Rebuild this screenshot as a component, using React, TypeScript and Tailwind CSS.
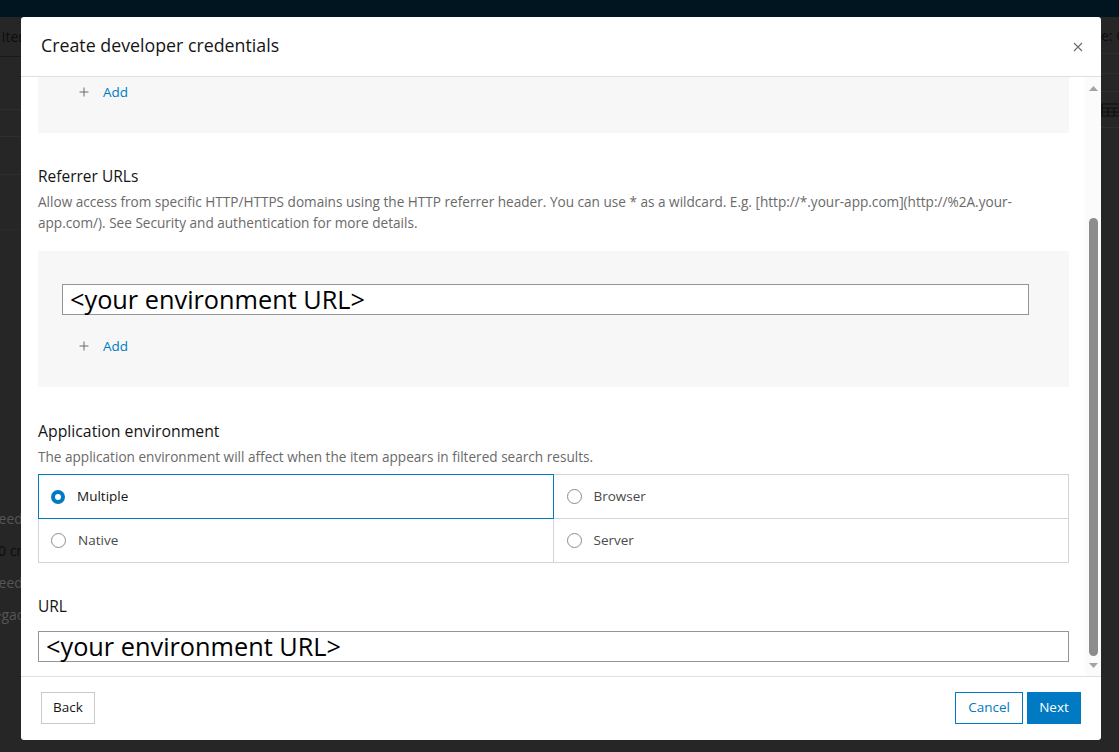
import React from "react";

const FONT = { fontFamily: "'Open Sans', 'Noto Sans', sans-serif" };

function AddRow() {
  return (
    <div className="flex items-center h-[20px] pl-[41px] text-[13.5px] text-[#007ac2]">
      <svg width="10" height="10" viewBox="0 0 10 10" className="mr-[14px]">
        <path d="M5 0.5V9.5M0.5 5H9.5" stroke="#6a6a6a" strokeWidth="1" />
      </svg>
      <span>Add</span>
    </div>
  );
}

function Radio({ checked }: { checked?: boolean }) {
  if (checked)
    return <span className="w-[14px] h-[14px] rounded-full border-[4.5px] border-[#007ac2] bg-white shrink-0" />;
  return <span className="w-[15px] h-[15px] rounded-full border border-[#8c8c8c] bg-white shrink-0" />;
}

function Cell({ label, checked, cls }: { label: string; checked?: boolean; cls: string }) {
  return (
    <div className={"flex items-center h-[45px] gap-[12px] text-[13.5px] border -mt-px " + cls}>
      <Radio checked={checked} />
      <span className={checked ? "text-[#151515]" : "text-[#4a4a4a]"}>{label}</span>
    </div>
  );
}

function UrlInput() {
  return (
    <div
      className="h-[31px] border border-[#959595] bg-white flex items-center pl-[7px] text-[25.3px] text-black leading-none"
      style={{ fontFamily: "'Open Sans', 'Noto Sans', sans-serif" }}
    >
      &lt;your environment URL&gt;
    </div>
  );
}

export default function App() {
  return (
    <div className="relative w-[1119px] h-[752px] overflow-hidden bg-[#262626]" style={FONT}>
      {/* Background page (dimmed) */}
      <div className="flex flex-col h-full">
        <div className="h-[17px] bg-[#001520] shrink-0" />
        <div className="flex flex-1 justify-between">
          <div className="w-[120px] flex flex-col text-[14px]">
            <div className="h-[40px] border-b border-[#1a1a1a] flex items-center -ml-[31px] text-[#0d0d0d] whitespace-nowrap">view items</div>
            <div className="h-[53px] border-b border-[#2e2e2e]" />
            <div className="h-[27px] border-b border-[#2e2e2e]" />
            <div className="h-[38px] border-b border-[#2e2e2e]" />
            <div className="h-[55px] border-b border-[#2b2b2b]" />
            <div className="h-[272px]" />
            <div className="h-[32px] -ml-[10px] flex items-center text-[#555]">needed</div>
            <div className="h-[32px] -ml-[2px] flex items-center text-[#0d0d0d]">0 credits</div>
            <div className="h-[32px] -ml-[10px] flex items-center text-[#555]">needed</div>
            <div className="h-[32px] -ml-[10px] flex items-center text-[#555]">legacy</div>
          </div>
          <div className="w-[18px] flex flex-col text-[14px] overflow-hidden">
            <div className="h-[37px] flex items-center border-b border-[#2e2e2e] text-[#0d0d0d] whitespace-nowrap">e: C</div>
            <div className="h-[20px] border-b border-[#2e2e2e]" />
            <div className="h-[18px] border-b border-[#2e2e2e]" />
            <div className="h-[36px] flex items-center border-b border-[#2e2e2e]">
              <svg width="18" height="14" viewBox="0 0 18 14">
                <path d="M1 1H18M1 5H18M1 9H18M1 13H18M1 1V13M7 5V13M13 5V13" stroke="#0d0d0d" strokeWidth="1.2" fill="none" />
              </svg>
            </div>
          </div>
        </div>
      </div>

      {/* Modal */}
      <div className="absolute left-[21px] top-[17px] w-[1080px] h-[723px] bg-white rounded-[3px] flex flex-col">
        <div className="h-[60px] shrink-0 border-b border-[#dfdfdf] flex items-center justify-between pl-[20px] pr-[18px]">
          <div className="text-[17.8px] text-[#151515] -mt-[2px]">Create developer credentials</div>
          <svg width="10" height="10" viewBox="0 0 10 10">
            <path d="M1 1L9 9M9 1L1 9" stroke="#6a6a6a" strokeWidth="1.1" />
          </svg>
        </div>

        <div className="flex-1 flex min-h-0 border-b border-[#dfdfdf]">
          <div className="flex-1 overflow-hidden pl-[17px] pr-[16px]">
            <div className="bg-[#f7f7f7] h-[56px] pt-[5px]">
              <AddRow />
            </div>

            <div className="mt-[34px] text-[15.5px] text-[#151515] leading-[18px]">Referrer URLs</div>
            <div className="mt-[6px] text-[13.6px] text-[#6a6a6a] leading-[21px]">
              Allow access from specific HTTP/HTTPS domains using the HTTP referrer header. You can use * as a wildcard. E.g. [http://*.your-app.com](http://%2A.your-app.com/). See Security and authentication for more details.
            </div>

            <div className="mt-[18px] bg-[#f7f7f7] h-[136px] pt-[33px] pl-[24px] pr-[40px]">
              <UrlInput />
              <div className="mt-[21px] -ml-[24px]">
                <AddRow />
              </div>
            </div>

            <div className="mt-[35px] text-[15.8px] text-[#151515] leading-[18px]">Application environment</div>
            <div className="mt-[6px] text-[13.6px] text-[#6a6a6a] leading-[21px]">
              The application environment will affect when the item appears in filtered search results.
            </div>

            <div className="mt-[8px] grid grid-cols-2">
              <Cell label="Multiple" checked cls="border-[#007ac2] relative z-10 pl-[12px]" />
              <Cell label="Browser" cls="border-[#d4d4d4] -ml-px pl-[13px]" />
              <Cell label="Native" cls="border-[#d4d4d4] pl-[12px]" />
              <Cell label="Server" cls="border-[#d4d4d4] -ml-px pl-[13px]" />
            </div>

            <div className="mt-[34px] text-[15.5px] text-[#151515] leading-[18px]">URL</div>
            <div className="mt-[16px]">
              <UrlInput />
            </div>
          </div>

          {/* scrollbar */}
          <div className="w-[16px] shrink-0 bg-[#fbfbfb] flex flex-col items-center pt-[9px] pb-[8px]">
            <svg width="9" height="5" viewBox="0 0 9 5" className="ml-[1px]">
              <path d="M0 5L4.5 0L9 5Z" fill="#a3a3a3" />
            </svg>
            <div className="flex-1 w-full flex flex-col items-center pt-[127px] pb-[7px]">
              <div className="w-[9px] flex-1 rounded-full bg-[#8c8c8c] ml-[1px]" />
            </div>
            <svg width="9" height="5" viewBox="0 0 9 5" className="ml-[1px]">
              <path d="M0 0L4.5 5L9 0Z" fill="#a3a3a3" />
            </svg>
          </div>
        </div>

        <div className="h-[63px] shrink-0 flex items-center justify-between pl-[20px] pr-[20px] pb-[2px]">
          <button className="h-[32px] w-[54px] border border-[#cacaca] text-[13.5px] text-[#151515] bg-white">Back</button>
          <div className="flex gap-[4px]">
            <button className="h-[32px] w-[68px] border border-[#007ac2] text-[13.5px] text-[#007ac2] bg-white">Cancel</button>
            <button className="h-[32px] w-[54px] bg-[#007ac2] text-[13.5px] text-white">Next</button>
          </div>
        </div>
      </div>
    </div>
  );
}
